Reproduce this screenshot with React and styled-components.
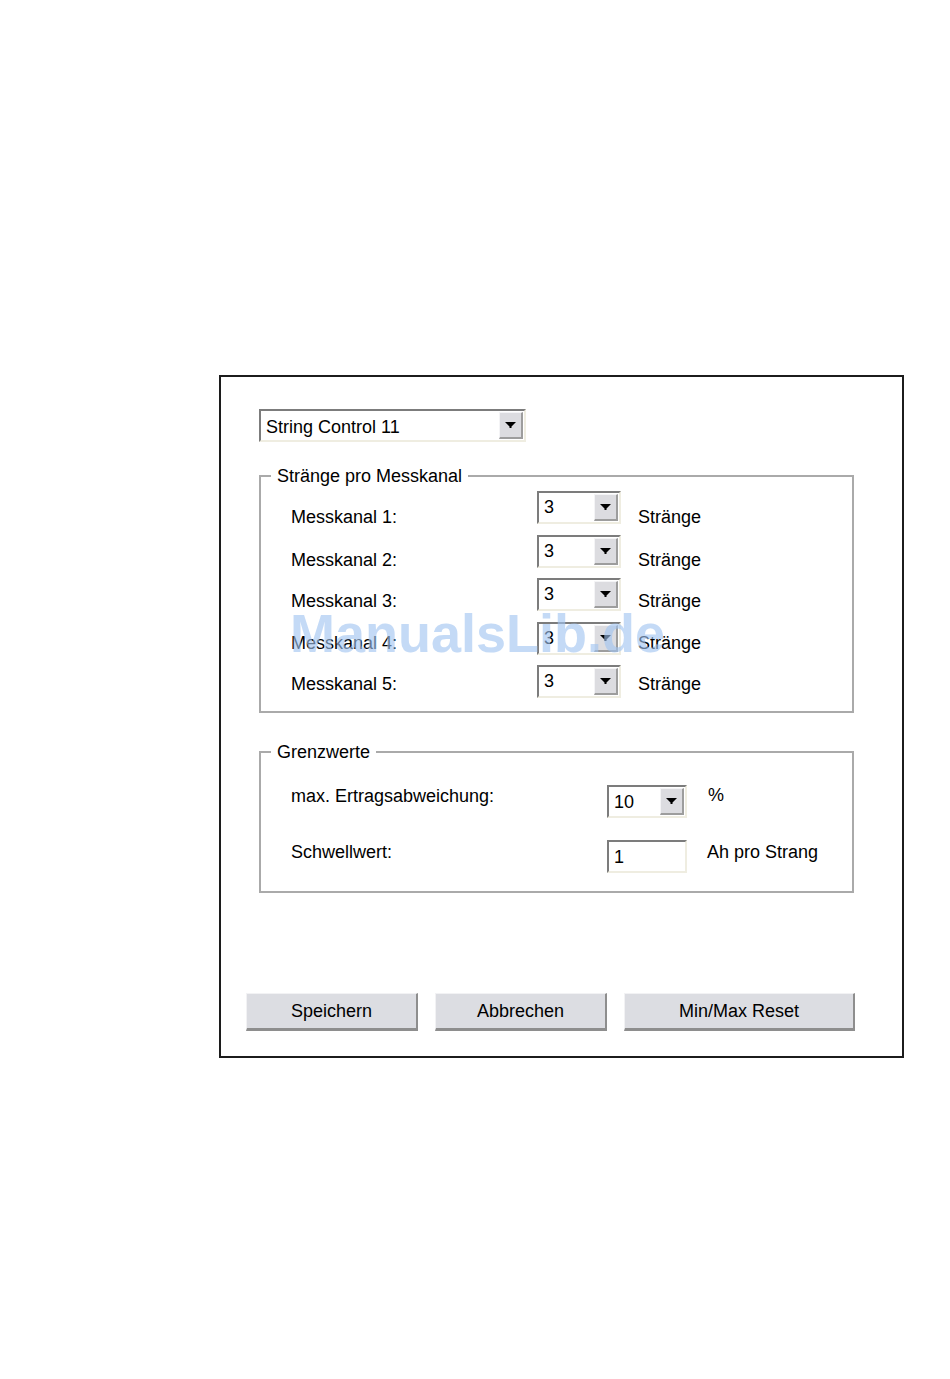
import React from "react";
import styled, { createGlobalStyle } from "styled-components";

const Global = createGlobalStyle`
  html, body {
    margin: 0;
    padding: 0;
    background: #ffffff;
  }
  body {
    font-family: "Liberation Sans", Arial, sans-serif;
    color: #000;
  }
`;

const Page = styled.div`
  position: relative;
  width: 950px;
  height: 1379px;
  padding: 375px 0 0 219px;
  box-sizing: border-box;
`;

const Frame = styled.div`
  width: 685px;
  height: 683px;
  box-sizing: border-box;
  border: 2px solid #1c1c1c;
  padding: 32px 0 25px 38px;
  display: flex;
  flex-direction: column;
`;

const ComboBox = styled.div`
  width: ${(p) => p.$w}px;
  height: 33px;
  box-sizing: border-box;
  display: flex;
  align-items: stretch;
  background: #fff;
  border-top: 2px solid #7c7c7c;
  border-left: 2px solid #7c7c7c;
  border-bottom: 2px solid #efede1;
  border-right: 2px solid #efede1;
`;

const ComboValue = styled.div`
  flex: 1;
  padding-left: 5px;
  font-size: 18px;
  line-height: ${(p) => p.$lh || 29}px;
  white-space: nowrap;
  overflow: hidden;
`;

const ArrowButton = styled.div`
  width: 24px;
  margin: 1px 1px 1px 0;
  box-sizing: border-box;
  background: #dcdce0;
  border-top: 1px solid #f4f4f6;
  border-left: 1px solid #f4f4f6;
  border-bottom: 2px solid #9d9d9d;
  border-right: 2px solid #9d9d9d;
  display: flex;
  align-items: center;
  justify-content: center;
`;

const Group = styled.fieldset`
  width: 595px;
  margin: ${(p) => p.$top}px 0 0 0;
  padding: ${(p) => p.$pad};
  box-sizing: border-box;
  border: 2px solid #aaaaaa;
`;

const Legend = styled.legend`
  margin-left: 10px;
  padding: 0 6px;
  font-size: 18px;
  line-height: 20px;
`;

const Rows = styled.div`
  display: grid;
  grid-template-columns: ${(p) => p.$label}px ${(p) => p.$field}px auto;
  grid-auto-rows: 33px;
  row-gap: ${(p) => p.$gap}px;
  padding-left: 30px;
  padding-top: ${(p) => p.$top}px;
  align-items: start;
`;

const Label = styled.div`
  font-size: 18px;
  line-height: 20px;
  margin-top: ${(p) => p.$shift}px;
  white-space: nowrap;
`;

const Unit = styled.div`
  font-size: 18px;
  line-height: 20px;
  margin-left: ${(p) => p.$left}px;
  margin-top: ${(p) => p.$shift}px;
  white-space: nowrap;
`;

const TextInput = styled(ComboBox)``;

const ButtonRow = styled.div`
  margin-top: auto;
  margin-left: -13px;
  display: flex;
  gap: 17px;
`;

const Button = styled.button`
  width: ${(p) => p.$w}px;
  height: 38px;
  box-sizing: border-box;
  background: #dcdde2;
  border: 0;
  border-top: 1px solid #f2f2f4;
  border-left: 1px solid #f2f2f4;
  border-right: 2px solid #8e8e8e;
  border-bottom: 3px solid #8e8e8e;
  font-family: "Liberation Sans", Arial, sans-serif;
  font-size: 18px;
  color: #000;
  padding: 0;
`;

const Watermark = styled.div`
  position: absolute;
  left: 290px;
  top: 606px;
  font-family: "Liberation Sans", Arial, sans-serif;
  font-weight: bold;
  font-size: 54px;
  line-height: 1;
  color: rgba(160, 195, 240, 0.62);
  pointer-events: none;
  white-space: nowrap;
`;

function Arrow() {
  return (
    <svg width="11" height="6" viewBox="0 0 11 6">
      <path d="M0 0H11L6.5 4.5V6H4.5V4.5Z" fill="#000" />
    </svg>
  );
}

function Combo({ width, value, lh }) {
  return (
    <ComboBox $w={width}>
      <ComboValue $lh={lh}>{value}</ComboValue>
      <ArrowButton>
        <Arrow />
      </ArrowButton>
    </ComboBox>
  );
}

const channels = [1, 2, 3, 4, 5];
const shifts = [16, 15, 13, 11, 9];

export default function App() {
  return (
    <Page>
      <Global />
      <Frame>
        <Combo width={267} value="String Control 11" lh={33} />

        <Group $top={24} $pad="0 0 13px 0">
          <Legend>Stränge pro Messkanal</Legend>
          <Rows $label={246} $field={84} $gap={10.5} $top={5}>
            {channels.map((n, i) => (
              <React.Fragment key={n}>
                <Label $shift={shifts[i]}>Messkanal {n}:</Label>
                <Combo width={84} value="3" />
                <Unit $left={17} $shift={shifts[i]}>
                  Stränge
                </Unit>
              </React.Fragment>
            ))}
          </Rows>
        </Group>

        <Group $top={29} $pad="0 0 18px 0">
          <Legend>Grenzwerte</Legend>
          <Rows $label={316} $field={80} $gap={22} $top={23}>
            <Label $shift={1}>max. Ertragsabweichung:</Label>
            <Combo width={80} value="10" lh={31} />
            <Unit $left={21} $shift={0}>
              %
            </Unit>
            <Label $shift={2}>Schwellwert:</Label>
            <TextInput $w={80}>
              <ComboValue $lh={31}>1</ComboValue>
            </TextInput>
            <Unit $left={20} $shift={2}>
              Ah pro Strang
            </Unit>
          </Rows>
        </Group>

        <ButtonRow>
          <Button $w={172}>Speichern</Button>
          <Button $w={172}>Abbrechen</Button>
          <Button $w={231}>Min/Max Reset</Button>
        </ButtonRow>
      </Frame>
      <Watermark>ManualsLib.de</Watermark>
    </Page>
  );
}
